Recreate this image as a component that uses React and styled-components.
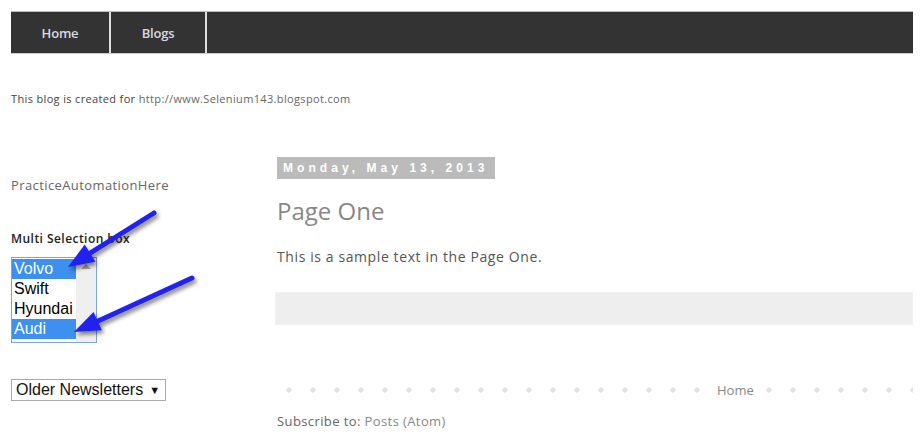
import React from 'react';
import styled, { createGlobalStyle } from 'styled-components';

const GlobalStyle = createGlobalStyle`
  body {
    margin: 0;
    background: #fff;
    font-family: 'Open Sans', 'DejaVu Sans', sans-serif;
  }
`;

const Page = styled.div`
  position: relative;
  width: 920px;
  height: 438px;
  overflow: hidden;
  padding: 11px 7px 0 11px;
  box-sizing: border-box;
`;

const NavBar = styled.nav`
  display: flex;
  height: 41px;
  background: #333;
  border-top: 1px solid #bbb;
  border-bottom: 1px solid #ccc;
`;

const NavTab = styled.a`
  display: flex;
  align-items: center;
  justify-content: center;
  width: ${p => p.$w}px;
  border-right: 2px solid #ddd;
  color: #d8dae0;
  font-size: 13px;
  font-weight: 600;
  letter-spacing: -0.2px;
  text-decoration: none;
`;

const Description = styled.p`
  margin: 38px 0 0;
  font-size: 11px;
  letter-spacing: 0.35px;
  color: #444;
  line-height: 14px;
`;

const Link = styled.a`
  color: ${p => p.$color || '#666'};
  text-decoration: none;
`;

const Columns = styled.div`
  display: flex;
  margin-top: 49px;
`;

const Sidebar = styled.aside`
  width: 264px;
  flex-shrink: 0;
  padding-top: 21px;
`;

const WidgetTitle = styled.div`
  font-size: 13px;
  letter-spacing: 0.4px;
  color: #666;
`;

const BoxLabel = styled.div`
  margin-top: 36px;
  font-size: 12px;
  font-weight: 600;
  color: #222;
  letter-spacing: 0.45px;
`;

const ListBox = styled.div`
  display: flex;
  margin-top: 10px;
  width: 84px;
  height: 84px;
  border: 1px solid #7da2e0;
  background: #fff;
`;

const Options = styled.div`
  flex: 1;
  padding-top: 1px;
`;

const Option = styled.div`
  height: 20px;
  line-height: 20px;
  padding-left: 2px;
  font-family: 'Liberation Sans', Arial, sans-serif;
  font-size: 16px;
  background: ${p => (p.$selected ? '#3d8ff0' : '#fff')};
  color: ${p => (p.$selected ? '#fff' : '#000')};
  white-space: nowrap;
  overflow: hidden;
`;

const ScrollTrack = styled.div`
  width: 20px;
  background: #efefef;
  display: flex;
  justify-content: center;
  padding-top: 6px;
  box-sizing: border-box;
`;

const UpArrow = styled.div`
  width: 0;
  height: 0;
  border-left: 5px solid transparent;
  border-right: 5px solid transparent;
  border-bottom: 5px solid #a3a3a3;
`;

const DropDown = styled.div`
  display: flex;
  align-items: center;
  gap: 6px;
  width: fit-content;
  margin-top: 36px;
  height: 20px;
  padding: 0 5px 0 4px;
  border: 1px solid #a9a9a9;
  font-family: 'Liberation Sans', Arial, sans-serif;
  font-size: 16px;
  color: #111;
`;

const Caret = styled.span`
  font-size: 11px;
`;

const Main = styled.main`
  flex: 1;
`;

const DateHeader = styled.div`
  display: inline-block;
  margin-left: 2px;
  padding: 0 6px;
  height: 22px;
  line-height: 22px;
  background: #bbb;
  color: #fff;
  font-family: 'Liberation Sans', Arial, sans-serif;
  font-size: 12px;
  font-weight: bold;
  letter-spacing: 4.05px;
`;

const PostTitle = styled.h3`
  margin: 15px 0 0 2px;
  font-size: 24px;
  font-weight: 400;
  color: #888;
  letter-spacing: 0;
`;

const PostBody = styled.p`
  margin: 20px 0 0 2px;
  font-size: 14px;
  letter-spacing: 0.6px;
  color: #555;
`;

const FooterBar = styled.div`
  margin-top: 26px;
  height: 31px;
  background: #eee;
  border: 1px solid #f2f2f2;
`;

const Pager = styled.div`
  margin-top: 58px;
  height: 14px;
  display: flex;
  align-items: center;
  padding-left: 437px;
  background-image: radial-gradient(circle, #e2e2e2 2.4px, transparent 2.8px);
  background-size: 24px 14px;
  background-position: 2px 0;
`;

const PagerLink = styled.a`
  background: #fff;
  padding: 0 5px;
  font-size: 13px;
  color: #888;
  text-decoration: none;
`;

const Subscribe = styled.div`
  margin: 15px 0 0 2px;
  font-size: 13px;
  letter-spacing: 0.4px;
  color: #666;
`;

const ArrowLayer = styled.svg`
  position: absolute;
  left: 0;
  top: 0;
  pointer-events: none;
`;

const arrows = [
  { x1: 154, y1: 213, x2: 68, y2: 267 },
  { x1: 192, y1: 278, x2: 74, y2: 332 },
];

const Arrows = () => (
  <ArrowLayer width="920" height="438">
    <defs>
      <filter id="shadow" x="-20%" y="-20%" width="140%" height="140%">
        <feDropShadow dx="2" dy="3" stdDeviation="2" floodColor="#000" floodOpacity="0.5" />
      </filter>
    </defs>
    {arrows.map((a, i) => {
      const ang = Math.atan2(a.y2 - a.y1, a.x2 - a.x1);
      const len = 28;
      const spread = 0.37;
      const bx = a.x2 - Math.cos(ang) * len * 0.8;
      const by = a.y2 - Math.sin(ang) * len * 0.8;
      const p1 = [a.x2 - Math.cos(ang - spread) * len, a.y2 - Math.sin(ang - spread) * len];
      const p2 = [a.x2 - Math.cos(ang + spread) * len, a.y2 - Math.sin(ang + spread) * len];
      return (
        <g key={i} filter="url(#shadow)">
          <line x1={a.x1} y1={a.y1} x2={bx} y2={by} stroke="#2222ee" strokeWidth="5" strokeLinecap="round" />
          <polygon points={`${a.x2},${a.y2} ${p1.join(',')} ${p2.join(',')}`} fill="#2222ee" />
        </g>
      );
    })}
  </ArrowLayer>
);

const cars = [
  { name: 'Volvo', selected: true },
  { name: 'Swift' },
  { name: 'Hyundai' },
  { name: 'Audi', selected: true },
];

export default function App() {
  return (
    <Page>
      <GlobalStyle />
      <NavBar>
        <NavTab $w={98}>Home</NavTab>
        <NavTab $w={94}>Blogs</NavTab>
      </NavBar>

      <Description>
        This blog is created for <Link>http://www.Selenium143.blogspot.com</Link>
      </Description>

      <Columns>
        <Sidebar>
          <WidgetTitle>PracticeAutomationHere</WidgetTitle>
          <BoxLabel>Multi Selection box</BoxLabel>
          <ListBox>
            <Options>
              {cars.map(c => (
                <Option key={c.name} $selected={c.selected}>{c.name}</Option>
              ))}
            </Options>
            <ScrollTrack>
              <UpArrow />
            </ScrollTrack>
          </ListBox>
          <DropDown>
            Older Newsletters <Caret>▼</Caret>
          </DropDown>
        </Sidebar>

        <Main>
          <DateHeader>Monday, May 13, 2013</DateHeader>
          <PostTitle>Page One</PostTitle>
          <PostBody>This is a sample text in the Page One.</PostBody>
          <FooterBar />
          <Pager>
            <PagerLink>Home</PagerLink>
          </Pager>
          <Subscribe>
            Subscribe to: <Link $color="#888">Posts (Atom)</Link>
          </Subscribe>
        </Main>
      </Columns>

      <Arrows />
    </Page>
  );
}
